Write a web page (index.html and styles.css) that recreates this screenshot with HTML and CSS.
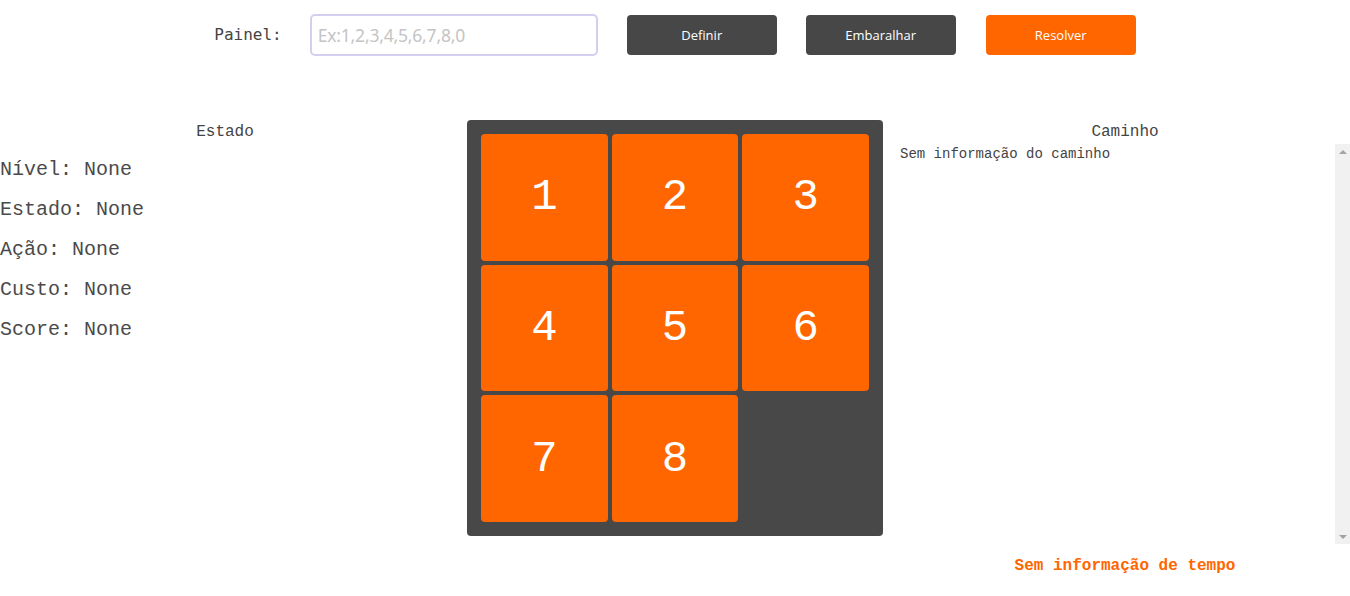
FILE: index.html
```html
<!DOCTYPE html>
<html lang="pt">
<head>
<meta charset="utf-8">
<title>8-Puzzle</title>
<link rel="stylesheet" href="styles.css">
</head>
<body>
<header class="toolbar">
  <label class="panel-label" for="panel">Painel:</label>
  <input id="panel" class="panel-input" type="text" placeholder="Ex:1,2,3,4,5,6,7,8,0">
  <button class="btn btn-dark">Definir</button>
  <button class="btn btn-dark">Embaralhar</button>
  <button class="btn btn-orange">Resolver</button>
</header>
<main class="layout">
  <section class="col">
    <h2 class="col-title">Estado</h2>
    <ul class="state-list">
      <li>Nível: None</li>
      <li>Estado: None</li>
      <li>Ação: None</li>
      <li>Custo: None</li>
      <li>Score: None</li>
    </ul>
  </section>
  <section class="col col-center">
    <div class="board">
      <div class="tile">1</div>
      <div class="tile">2</div>
      <div class="tile">3</div>
      <div class="tile">4</div>
      <div class="tile">5</div>
      <div class="tile">6</div>
      <div class="tile">7</div>
      <div class="tile">8</div>
      <div class="tile tile-empty"></div>
    </div>
  </section>
  <section class="col">
    <h2 class="col-title">Caminho</h2>
    <div class="path-box">
      <div class="path-text">Sem informação do caminho</div>
      <div class="scrollbar" aria-hidden="true">
        <span class="arrow arrow-up"></span>
        <span class="arrow arrow-down"></span>
      </div>
    </div>
    <p class="time-info">Sem informação de tempo</p>
  </section>
</main>
</body>
</html>
```

FILE: styles.css
```css
* { box-sizing: border-box; }

body {
  margin: 0;
  background: #ffffff;
  color: #4a4a4a;
  font-family: "Liberation Mono", "DejaVu Sans Mono", monospace;
}

.toolbar {
  display: flex;
  justify-content: center;
  align-items: center;
  gap: 29px;
  padding-top: 14px;
  height: 56px;
}

.panel-label {
  font-family: "DejaVu Sans Mono", monospace;
  font-size: 16px;
  color: #444;
  margin-top: -2px;
  margin-right: -1px;
}

.panel-input {
  width: 288px;
  height: 42px;
  border: 2px solid #d2d0ee;
  border-radius: 5px;
  padding: 0 6px;
  font-family: "Noto Sans", sans-serif;
  font-size: 17.5px;
  color: #444;
  outline: none;
}
.panel-input::placeholder {
  color: #c4c4c4;
  letter-spacing: -0.2px;
}

.btn {
  width: 150px;
  height: 40px;
  border: none;
  border-radius: 4px;
  color: #ffffff;
  font-family: "Open Sans", sans-serif;
  font-size: 13px;
}
.btn-dark { background: #474747; }
.btn-orange { background: #ff6600; margin-left: 1px; }

.layout {
  display: grid;
  grid-template-columns: 450px 450px 450px;
  margin-top: 64px;
}

.col-title {
  margin: 0;
  padding-top: 1px;
  font-size: 16px;
  font-weight: normal;
  line-height: 22px;
  text-align: center;
  color: #444;
}

.state-list {
  list-style: none;
  margin: 7px 0 0;
  padding: 0;
  font-size: 20px;
  line-height: 40px;
}

.col-center {
  display: flex;
  justify-content: center;
}

.board {
  width: 416px;
  height: 416px;
  background: #484848;
  border-radius: 4px;
  padding: 14px;
  display: grid;
  grid-template-columns: repeat(3, 1fr);
  grid-template-rows: repeat(3, 1fr);
  gap: 4px;
}

.tile {
  background: #ff6600;
  border-radius: 4px;
  color: #ffffff;
  font-size: 44px;
  display: flex;
  align-items: center;
  justify-content: center;
}
.tile-empty { background: transparent; }

.path-box {
  margin-top: 1px;
  height: 400px;
  display: flex;
  font-size: 14px;
  line-height: 18px;
  color: #444;
}

.path-text {
  flex: 1;
  padding-top: 1px;
  overflow-y: auto;
}

.scrollbar {
  width: 15px;
  background: #f1f1f1;
  display: flex;
  flex-direction: column;
  justify-content: space-between;
  align-items: center;
  padding: 6px 0 5px;
}

.arrow {
  width: 0;
  height: 0;
  border-left: 4px solid transparent;
  border-right: 4px solid transparent;
}
.arrow-up { border-bottom: 4px solid #a3a3a3; }
.arrow-down { border-top: 4px solid #a3a3a3; }

.time-info {
  margin: 11px 0 0;
  text-align: center;
  font-size: 16px;
  line-height: 22px;
  font-weight: bold;
  color: #ff6600;
}
```
